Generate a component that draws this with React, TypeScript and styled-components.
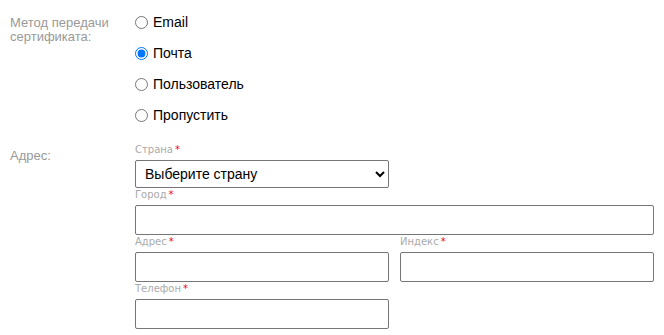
import React from "react";
import styled, { createGlobalStyle } from "styled-components";

const Global = createGlobalStyle`
  html, body { margin: 0; padding: 0; background: #fff; }
  body { font-family: "Liberation Sans", Arial, sans-serif; }
`;

const Form = styled.div`
  padding: 13px 10px 0 10px;
  display: flex;
  flex-direction: column;
  gap: 19px;
`;

const Row = styled.div`
  display: grid;
  grid-template-columns: 125px 519px;
`;

const RowLabel = styled.div<{ $top?: number }>`
  font-size: 13px;
  line-height: 14px;
  color: #999;
  padding-top: ${(p) => p.$top ?? 0}px;
`;

const RadioList = styled.div`
  display: flex;
  flex-direction: column;
  gap: 13px;
`;

const RadioLabel = styled.label`
  display: flex;
  align-items: center;
  height: 18px;
  font-size: 14px;
  color: #000;
  cursor: pointer;
  input {
    margin: 0 5px 0 0;
    width: 13px;
    height: 13px;
  }
`;

const Fields = styled.div`
  display: grid;
  grid-template-columns: 254px 254px;
  column-gap: 11px;
`;

const Field = styled.div<{ $full?: boolean }>`
  display: flex;
  flex-direction: column;
  grid-column: ${(p) => (p.$full ? "1 / span 2" : "auto")};
`;

const FieldLabel = styled.div`
  font-family: "DejaVu Sans", Verdana, sans-serif;
  font-size: 10px;
  color: #aaa;
  line-height: 13px;
  height: 17px;
  box-sizing: border-box;
  span { color: #f0003c; margin-left: 2px; }
`;

const Select = styled.select`
  height: 28px;
  box-sizing: border-box;
  border: 1px solid #767676;
  border-radius: 2px;
  font-family: "Liberation Sans", Arial, sans-serif;
  font-size: 14px;
  color: #000;
  background: #fff;
  padding: 0 5px;
`;

const Input = styled.input`
  height: 30px;
  box-sizing: border-box;
  border: 1px solid #767676;
  border-radius: 2px;
  font-family: "Liberation Sans", Arial, sans-serif;
  font-size: 14px;
  padding: 0 6px;
`;

const options = ["Email", "Почта", "Пользователь", "Пропустить"];

export default function App() {
  const [method, setMethod] = React.useState("Почта");
  return (
    <>
      <Global />
      <Form>
        <Row>
          <RowLabel $top={3}>
            Метод передачи
            <br />
            сертификата:
          </RowLabel>
          <RadioList>
            {options.map((o) => (
              <RadioLabel key={o}>
                <input
                  type="radio"
                  name="method"
                  checked={method === o}
                  onChange={() => setMethod(o)}
                />
                {o}
              </RadioLabel>
            ))}
          </RadioList>
        </Row>
        <Row>
          <RowLabel $top={6}>Адрес:</RowLabel>
          <Fields>
            <Field>
              <FieldLabel>
                Страна<span>*</span>
              </FieldLabel>
              <Select defaultValue="">
                <option value="">Выберите страну</option>
              </Select>
            </Field>
            <div />
            <Field $full>
              <FieldLabel>
                Город<span>*</span>
              </FieldLabel>
              <Input />
            </Field>
            <Field>
              <FieldLabel>
                Адрес<span>*</span>
              </FieldLabel>
              <Input />
            </Field>
            <Field>
              <FieldLabel>
                Индекс<span>*</span>
              </FieldLabel>
              <Input />
            </Field>
            <Field>
              <FieldLabel>
                Телефон<span>*</span>
              </FieldLabel>
              <Input />
            </Field>
          </Fields>
        </Row>
      </Form>
    </>
  );
}
